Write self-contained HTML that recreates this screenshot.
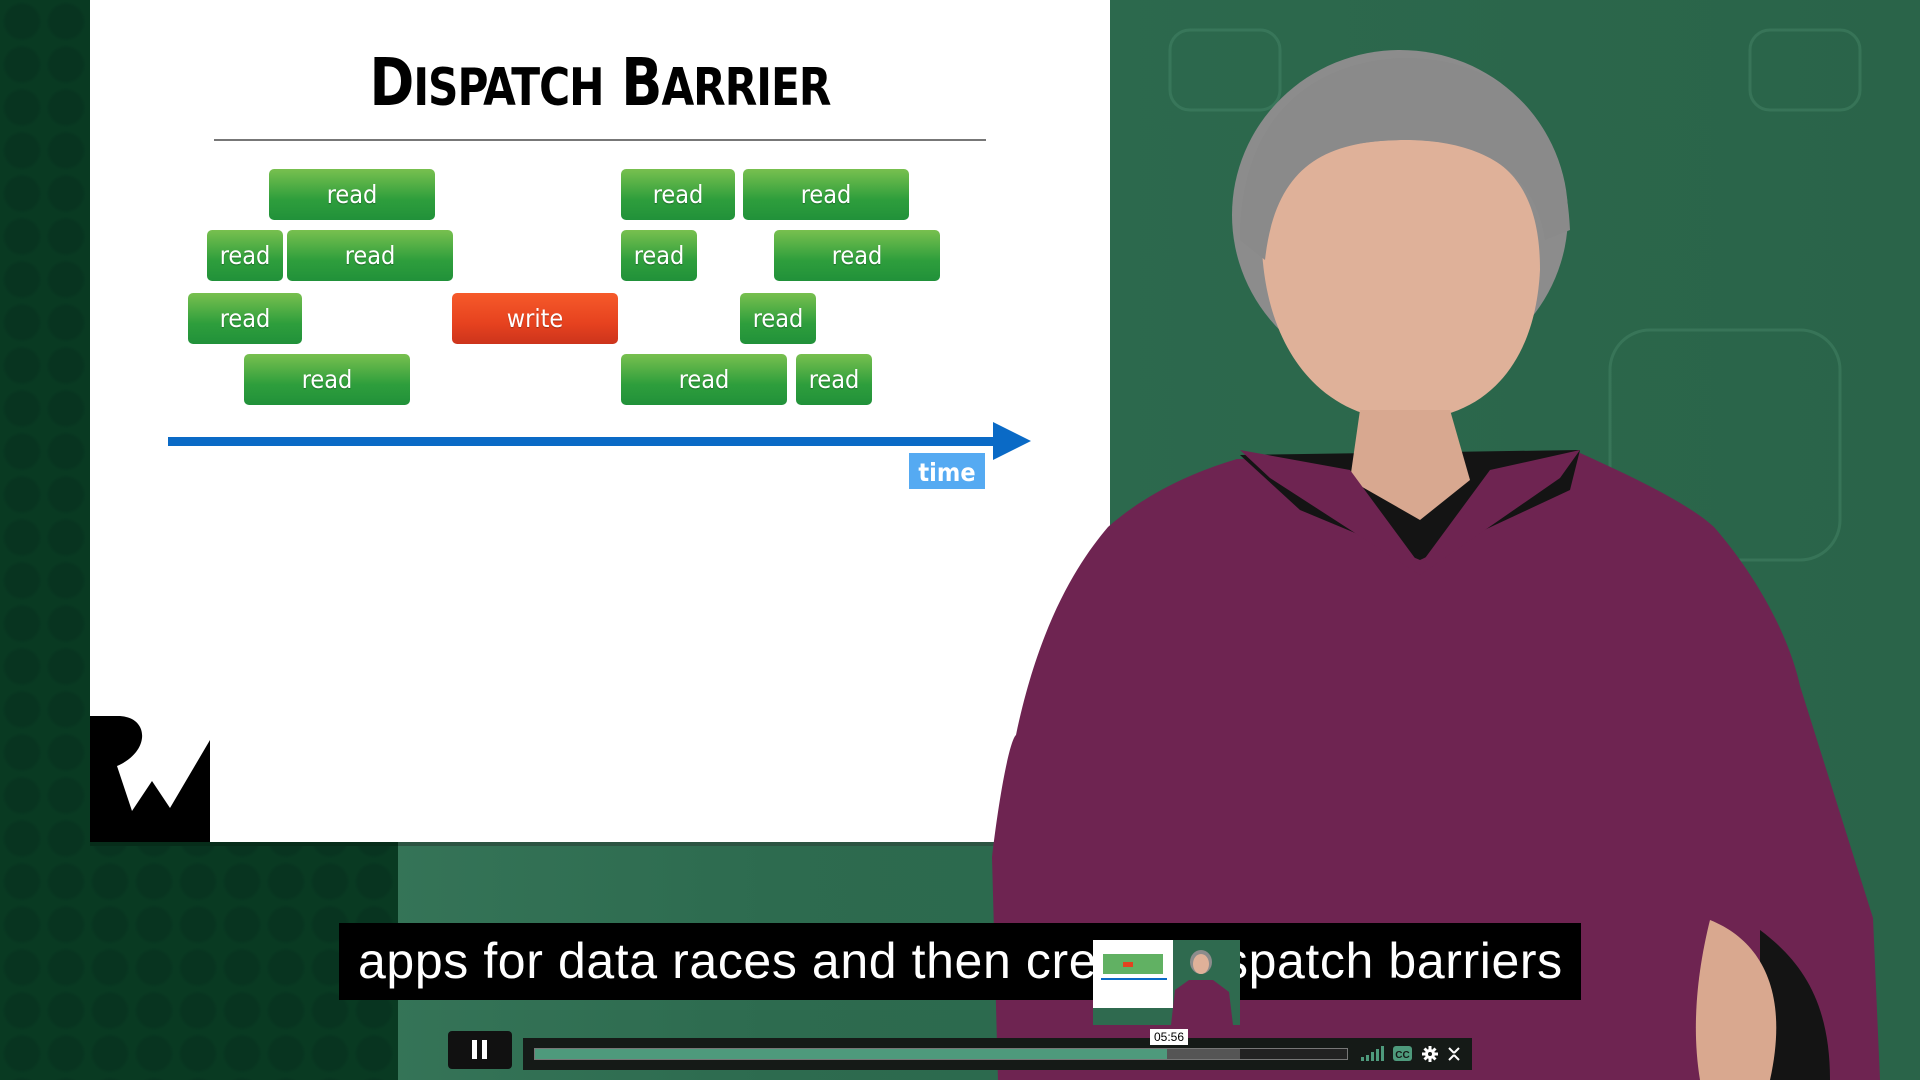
<!DOCTYPE html>
<html><head><meta charset="utf-8"><style>
*{margin:0;padding:0;box-sizing:border-box}
body{width:1920px;height:1080px;overflow:hidden;position:relative;background:#2f6a4f;font-family:"Liberation Sans",sans-serif}
.bg{position:absolute;left:0;top:0;width:1920px;height:1080px;background:linear-gradient(90deg,#3d7d60 0%,#2d6b4f 40%,#2a6449 100%)}
.tiles{position:absolute;left:0;top:0;width:398px;height:1080px;background-color:#093a22;
background-image:radial-gradient(circle at 50% 50%,#083420 0,#083420 16px,transparent 20px);
background-size:44px 43px}
.slide{position:absolute;left:90px;top:0;width:1020px;height:842px;background:#fff}
.title{position:absolute;left:90px;width:1020px;top:48px;text-align:center;font-family:"DejaVu Sans Condensed","Liberation Sans Narrow",sans-serif;font-weight:bold;font-size:60px;color:#000;letter-spacing:-1px;transform:scaleY(1.1)}
.title small{font-size:47px}
.rule{position:absolute;left:214px;top:139px;width:772px;height:2px;background:#777}
.b{position:absolute;height:51px;border-radius:5px;background:linear-gradient(#78c04f,#2e9e3c 60%,#21913a);color:#fff;font-size:25px;display:flex;align-items:center;justify-content:center;font-family:"DejaVu Sans Condensed","Liberation Sans",sans-serif;text-shadow:0 1px 1px rgba(0,0,0,.3)}
.w{background:linear-gradient(#f65a2a,#e6421f 60%,#cc341c)}
.sub{position:absolute;left:339px;top:923px;width:1242px;height:77px;background:#000;color:#fff;font-size:50px;line-height:77px;padding-left:19px;letter-spacing:.6px;white-space:nowrap;overflow:hidden}
</style></head><body>
<div class="bg"></div>
<svg style="position:absolute;left:0;top:0" width="1920" height="1080">
 <g fill="none" opacity=".35" stroke="#4f9173" stroke-width="3">
  <rect x="1610" y="330" width="230" height="230" rx="40"/>
  <rect x="1170" y="30" width="110" height="80" rx="20"/>
  <rect x="1750" y="30" width="110" height="80" rx="20"/>
 </g>
</svg>
<div class="tiles"></div>
<div class="slide"></div>
<div class="title">D<small>ISPATCH</small> B<small>ARRIER</small></div>
<div class="rule"></div>
<div class="b" style="left:269px;top:169px;width:166px">read</div>
<div class="b" style="left:621px;top:169px;width:114px">read</div>
<div class="b" style="left:743px;top:169px;width:166px">read</div>
<div class="b" style="left:207px;top:230px;width:76px">read</div>
<div class="b" style="left:287px;top:230px;width:166px">read</div>
<div class="b" style="left:621px;top:230px;width:76px">read</div>
<div class="b" style="left:774px;top:230px;width:166px">read</div>
<div class="b" style="left:188px;top:293px;width:114px">read</div>
<div class="b w" style="left:452px;top:293px;width:166px">write</div>
<div class="b" style="left:740px;top:293px;width:76px">read</div>
<div class="b" style="left:244px;top:354px;width:166px">read</div>
<div class="b" style="left:621px;top:354px;width:166px">read</div>
<div class="b" style="left:796px;top:354px;width:76px">read</div>
<svg style="position:absolute;left:0;top:0" width="1920" height="1080">
 <rect x="168" y="437" width="830" height="9" fill="#0a6ac6"/>
 <polygon points="993,422 1031,441 993,460" fill="#0a6ac6"/>
 <rect x="909" y="453" width="76" height="36" fill="#55aaf2"/>
 <text x="947" y="481" fill="#fff" font-size="25" font-weight="bold" text-anchor="middle" font-family="DejaVu Sans Condensed,Liberation Sans,sans-serif">time</text>
 <path d="M90,716 L120,716 C150,718 150,752 117,766 L132,811 L152,781 L170,808 L210,740 L210,842 L90,842 Z" fill="#000"/>
 <rect x="90" y="842" width="308" height="4" fill="#072d1a"/>
 <rect x="398" y="842" width="600" height="4" fill="#2c5442"/>
 <path d="M998,1080 L992,857 C1000,790 1010,740 1016,735 C1040,620 1080,560 1108,527 C1150,490 1200,470 1237,459 L1580,453 C1640,480 1690,505 1714,527 C1760,580 1790,640 1800,686 L1873,918 L1880,1080 Z" fill="#6e2451"/>
 <path d="M1240,455 L1580,450 L1570,490 L1420,560 L1300,510 Z" fill="#141414"/>
 <ellipse cx="1400" cy="215" rx="168" ry="165" fill="#8c8c8c"/>
 <path d="M1262,250 C1265,170 1320,140 1405,140 C1495,140 1540,175 1540,270 C1535,370 1480,420 1405,420 C1330,420 1268,360 1262,250 Z" fill="#dfb199"/>
 <path d="M1240,240 C1240,110 1320,60 1405,58 C1495,58 1565,110 1570,230 L1545,240 C1535,170 1480,140 1405,140 C1320,140 1275,170 1265,260 Z" fill="#8a8a8a"/>
 <path d="M1360,410 L1450,410 L1470,480 L1420,520 L1350,480 Z" fill="#d8a890"/>
 <path d="M1240,450 L1350,470 L1420,565 L1490,470 L1580,450 L1560,478 L1420,575 L1270,478 Z" fill="#6e2451"/>
 <path d="M1760,930 C1800,960 1830,1000 1830,1080 L1760,1080 Z" fill="#141414"/>
 <path d="M1710,920 C1760,940 1790,990 1770,1080 L1700,1080 C1690,1020 1700,960 1710,920 Z" fill="#d9a88f"/>
</svg>
<div class="sub">apps for data races and then create dispatch barriers</div>
<svg style="position:absolute;left:1093px;top:940px" width="147" height="85">
 <rect width="147" height="85" fill="#2f6a4f"/>
 <rect width="80" height="68" fill="#fff"/>
 <rect x="10" y="14" width="60" height="20" fill="#3a9e3c" opacity=".8"/>
 <rect x="30" y="22" width="10" height="5" fill="#e4421f"/>
 <rect x="8" y="38" width="66" height="2" fill="#0a6ac6"/>
 <ellipse cx="108" cy="22" rx="11" ry="12" fill="#8c8c8c"/>
 <ellipse cx="108" cy="24" rx="8" ry="10" fill="#dfb199"/>
 <path d="M78,85 L82,50 L96,40 L120,40 L136,52 L140,85 Z" fill="#6e2451"/>
</svg>
<div style="position:absolute;left:448px;top:1031px;width:64px;height:38px;background:#111;border-radius:4px"></div>
<div style="position:absolute;left:472px;top:1040px;width:5px;height:19px;background:#fff"></div>
<div style="position:absolute;left:482px;top:1040px;width:5px;height:19px;background:#fff"></div>
<div style="position:absolute;left:523px;top:1038px;width:949px;height:32px;background:#151a17"></div>
<div style="position:absolute;left:534px;top:1048px;width:814px;height:12px;border:1px solid #777;background:#222"></div>
<div style="position:absolute;left:535px;top:1049px;width:705px;height:10px;background:#555"></div>
<div style="position:absolute;left:535px;top:1049px;width:632px;height:10px;background:#4e9a7c"></div>
<div style="position:absolute;left:1150px;top:1029px;width:38px;height:16px;background:#fff;color:#000;font-size:12px;text-align:center;line-height:16px">05:56</div>
<svg style="position:absolute;left:1355px;top:1043px" width="115" height="22">
 <g fill="#4e9a7c"><rect x="6" y="14" width="3" height="4"/><rect x="11" y="12" width="3" height="6"/><rect x="16" y="9" width="3" height="9"/><rect x="21" y="6" width="3" height="12"/><rect x="26" y="3" width="3" height="15"/></g>
 <rect x="38" y="3" width="19" height="15" rx="3" fill="#4e9a7c"/>
 <text x="47.5" y="15" font-size="10" font-weight="bold" text-anchor="middle" fill="#151a17">CC</text>
 <g stroke="#fff" stroke-width="3"><path d="M75,3 V19 M67,11 H83 M69.5,5.5 L80.5,16.5 M80.5,5.5 L69.5,16.5"/></g>
 <circle cx="75" cy="11" r="5" fill="#fff"/><circle cx="75" cy="11" r="2" fill="#151a17"/>
 <path d="M94,5 L99,10 M104,5 L99,10 M94,17 L99,12 M104,17 L99,12" stroke="#fff" stroke-width="2"/>
</svg>
</body></html>
